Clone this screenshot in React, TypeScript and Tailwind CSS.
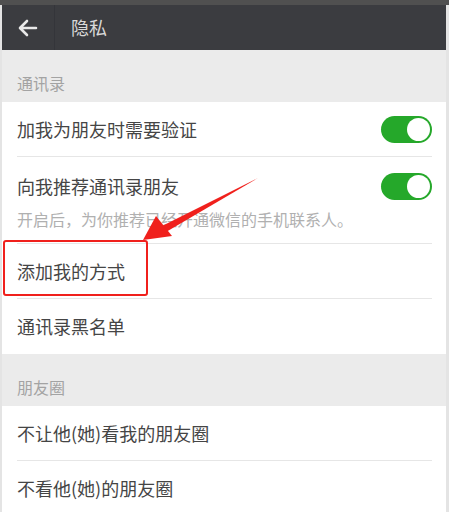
import React from "react";

const font = { fontFamily: '"Noto Sans CJK SC", "Noto Sans", sans-serif' };

const Toggle = () => (
  <div className="w-[51px] h-[27px] rounded-full bg-[#25a82a] flex items-center justify-end pr-[2px]">
    <div className="w-[23px] h-[23px] rounded-full bg-white" />
  </div>
);

const Row = ({ label, toggle, last }: { label: string; toggle?: boolean; last?: boolean }) => (
  <div className="pl-[15px] pr-[14px]">
    <div className={`h-[55px] flex items-center justify-between ${last ? "" : "border-b border-[#e6e6e6]"}`}>
      <span className="text-[18px] text-[#454545]">{label}</span>
      {toggle && <Toggle />}
    </div>
  </div>
);

const SectionTitle = ({ text }: { text: string }) => (
  <div className="h-[52px] bg-[#ebebeb] flex items-end pb-[7px] px-[15px]">
    <span className="text-[16px] text-[#a3a3a3]">{text}</span>
  </div>
);

export default function App() {
  return (
    <div className="relative w-[449px] h-[512px] overflow-hidden bg-[#e4e4e4] pl-[2px] pr-[3px]" style={font}>
      <div className="h-[5px] bg-[#505050] -ml-[2px] -mr-[3px]" />
      <div className="h-[45px] bg-[#3b3c40] flex items-center">
        <div className="w-[52px] flex justify-center">
          <svg width="20" height="18" viewBox="0 0 20 18" fill="none" stroke="#e8e8e8" strokeWidth="2.6" strokeLinecap="round" strokeLinejoin="round">
            <path d="M18 9H3M9 2L2 9l7 7" />
          </svg>
        </div>
        <div className="w-[1px] h-full bg-[#34353a]" />
        <span className="ml-[16px] text-[18px] text-[#d9d9d9]">隐私</span>
      </div>
      <div className="bg-white">
        <SectionTitle text="通讯录" />
        <Row label="加我为朋友时需要验证" toggle />
        <div className="pl-[15px] pr-[14px]">
          <div className="border-b border-[#e6e6e6] pb-[16px]">
            <div className="h-[54px] flex items-center justify-between pt-[5px]">
              <span className="text-[18px] text-[#454545]">向我推荐通讯录朋友</span>
              <Toggle />
            </div>
            <div className="text-[16px] text-[#b0b0b0] leading-[16px]">开启后，为你推荐已经开通微信的手机联系人。</div>
          </div>
        </div>
        <Row label="添加我的方式" />
        <Row label="通讯录黑名单" last />
        <SectionTitle text="朋友圈" />
        <Row label="不让他(她)看我的朋友圈" />
        <Row label="不看他(她)的朋友圈" />
      </div>
      <div className="absolute left-[3px] top-[240px] w-[145px] h-[56px] border-[2.5px] border-[#f0201c] rounded-[3px]" />
      <svg className="absolute left-0 top-0" width="449" height="512" viewBox="0 0 449 512">
        <path d="M258 178 L162 226 L166 232 Z" fill="#f0201c" />
        <path d="M143 240 L156 216 L172 236 Z" fill="#f0201c" />
      </svg>
    </div>
  );
}
